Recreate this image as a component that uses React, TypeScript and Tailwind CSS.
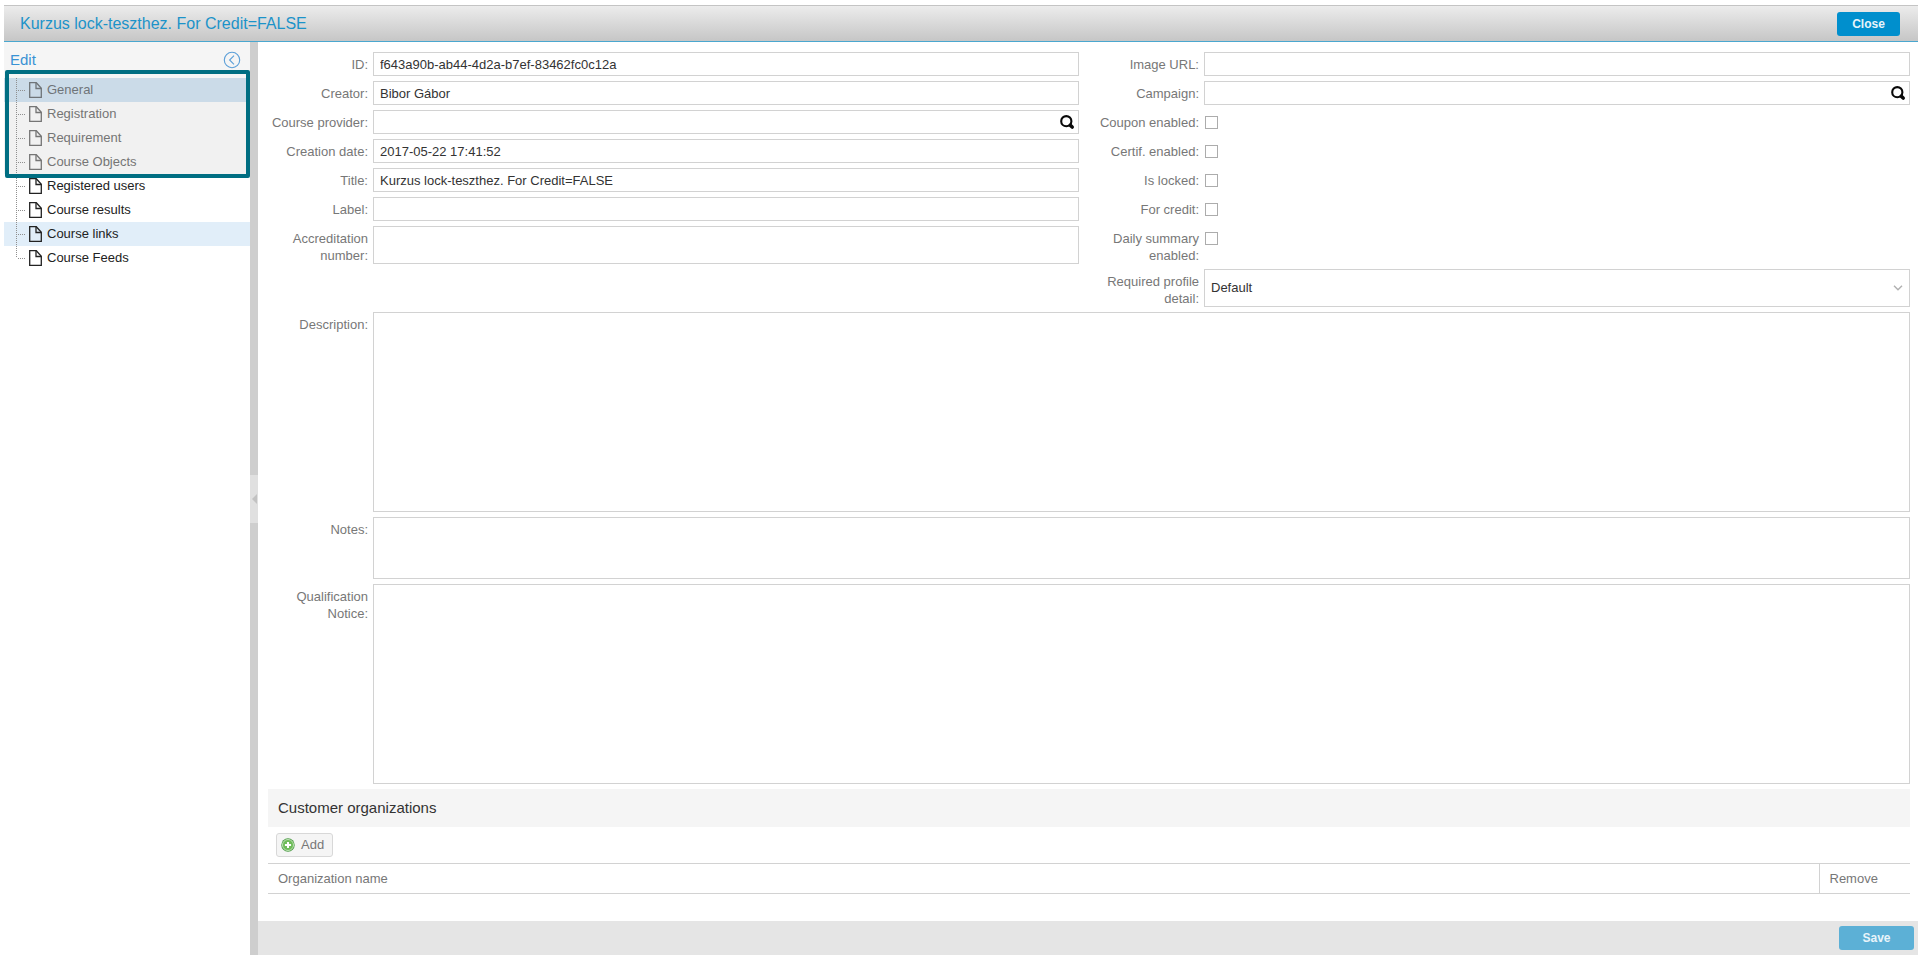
import type { ReactNode } from "react";

type NavItem = { label: string; locked: boolean; tone: string };

const navItems: NavItem[] = [
  { label: "General", locked: true, tone: "bg-[#cbdbe8] text-[#6f7478]" },
  { label: "Registration", locked: true, tone: "bg-[#f1f1f1] text-[#757575]" },
  { label: "Requirement", locked: true, tone: "bg-[#f1f1f1] text-[#757575]" },
  { label: "Course Objects", locked: true, tone: "bg-[#f1f1f1] text-[#757575]" },
  { label: "Registered users", locked: false, tone: "text-[#222]" },
  { label: "Course results", locked: false, tone: "text-[#222]" },
  { label: "Course links", locked: false, tone: "bg-[#e1eef9] text-[#222]" },
  { label: "Course Feeds", locked: false, tone: "text-[#222]" },
];

function FileIcon() {
  return (
    <svg width="13" height="16" viewBox="0 0 13 16" fill="none" stroke="currentColor" strokeWidth="1.3" className="shrink-0">
      <path d="M.7.7h6.6l5 5.6v9H.7z" />
      <path d="M7 .7v5.8h5.3" />
    </svg>
  );
}

function SearchIcon() {
  return (
    <svg width="16" height="16" viewBox="0 0 16 16" fill="none" stroke="#0a0a0a">
      <circle cx="7.3" cy="7.2" r="5.1" strokeWidth="2.1" />
      <path d="M11.4 11.4l1.8 1.6" strokeWidth="3.6" strokeLinecap="round" />
    </svg>
  );
}

function TreeLine({ last }: { last: boolean }) {
  return (
    <svg width="13" height="24" viewBox="0 0 13 24" fill="none" stroke="#8f8f8f" strokeDasharray="1 1" className="shrink-0">
      <path d={last ? "M.5 0v12" : "M.5 0v24"} />
      <path d="M2 12.5h8" />
    </svg>
  );
}

function Sidebar() {
  return (
    <aside className="relative w-[246px] shrink-0 bg-white">
      <div className="flex h-9 items-center justify-between bg-[#f5f5f5] pr-[9px] pl-[6px]">
        <h2 className="text-[15px] text-[#3892d4]">Edit</h2>
        <button type="button" aria-label="Collapse menu" className="text-[#5b9fd8]">
          <svg width="18" height="18" viewBox="0 0 18 18" fill="none" stroke="currentColor" strokeWidth="1.1">
            <circle cx="9" cy="9" r="7.7" />
            <path d="M11 4.6L6.6 9l4.4 4.4" />
          </svg>
        </button>
      </div>
      <nav>
        <ul>
          {navItems.map((item, i) => (
            <li key={item.label}>
              <a
                href="#"
                aria-disabled={item.locked}
                className={`flex h-6 items-center pl-3 text-[13px] ${item.tone}`}
              >
                <TreeLine last={i === navItems.length - 1} />
                <FileIcon />
                <span className="pl-[5px]">{item.label}</span>
              </a>
            </li>
          ))}
        </ul>
      </nav>
      <div className="pointer-events-none absolute top-7 right-0 left-px h-[108px] rounded-[2px] border-4 border-[#006e82]" />
    </aside>
  );
}

function Row({ id, label, children }: { id: string; label: string; children: ReactNode }) {
  return (
    <div className="flex gap-[5px]">
      <label htmlFor={id} className="w-[100px] shrink-0 pt-1 text-right leading-[17px] text-[#777]">
        {label}
      </label>
      <div className="min-w-0 flex-1">{children}</div>
    </div>
  );
}

function TextRow({ id, label, value = "", tall = false, search = false }: { id: string; label: string; value?: string; tall?: boolean; search?: boolean }) {
  return (
    <Row id={id} label={label}>
      <div className={`flex items-center border border-[#d2d2d2] bg-white ${tall ? "h-[38px]" : "h-6"}`}>
        <input id={id} type="text" defaultValue={value} className="h-full min-w-0 flex-1 px-[6px] text-[#333] outline-none" />
        {search && (
          <button type="button" aria-label={`Search ${label}`} className="pr-[3px]">
            <SearchIcon />
          </button>
        )}
      </div>
    </Row>
  );
}

function CheckRow({ id, label }: { id: string; label: string }) {
  return (
    <Row id={id} label={label}>
      <div className="flex h-6 items-center pl-px">
        <input id={id} type="checkbox" className="size-[13px] appearance-none border border-[#acacac] bg-white checked:bg-[#008fcd]" />
      </div>
    </Row>
  );
}

function AreaRow({ id, label, size }: { id: string; label: string; size: string }) {
  return (
    <Row id={id} label={label}>
      <textarea id={id} className={`block w-full resize-none border border-[#d2d2d2] bg-white px-[6px] py-1 text-[#333] outline-none ${size}`} />
    </Row>
  );
}

function CourseForm() {
  return (
    <form className="flex flex-col gap-[5px]">
      <div className="grid grid-cols-2 gap-x-5">
        <div className="flex flex-col gap-[5px]">
          <TextRow id="id" label="ID:" value="f643a90b-ab44-4d2a-b7ef-83462fc0c12a" />
          <TextRow id="creator" label="Creator:" value="Bibor Gábor" />
          <TextRow id="provider" label="Course provider:" search />
          <TextRow id="created" label="Creation date:" value="2017-05-22 17:41:52" />
          <TextRow id="title" label="Title:" value="Kurzus lock-teszthez. For Credit=FALSE" />
          <TextRow id="label" label="Label:" />
          <TextRow id="accreditation" label="Accreditation number:" tall />
        </div>
        <div className="flex flex-col gap-[5px]">
          <TextRow id="image" label="Image URL:" />
          <TextRow id="campaign" label="Campaign:" search />
          <CheckRow id="coupon" label="Coupon enabled:" />
          <CheckRow id="certif" label="Certif. enabled:" />
          <CheckRow id="locked" label="Is locked:" />
          <CheckRow id="credit" label="For credit:" />
          <CheckRow id="daily" label="Daily summary enabled:" />
          <Row id="profile" label="Required profile detail:">
            <div className="relative">
              <select id="profile" className="block h-[38px] w-full appearance-none border border-[#d2d2d2] bg-white px-[6px] text-[#333] outline-none">
                <option>Default</option>
              </select>
              <svg width="10" height="6" viewBox="0 0 10 6" fill="none" stroke="#b0b0b0" strokeWidth="1.4" className="pointer-events-none absolute top-4 right-[7px]">
                <path d="M1 .8l4 4 4-4" />
              </svg>
            </div>
          </Row>
        </div>
      </div>
      <AreaRow id="description" label="Description:" size="h-[200px]" />
      <AreaRow id="notes" label="Notes:" size="h-[62px]" />
      <AreaRow id="qualification" label="Qualification Notice:" size="h-[200px]" />
    </form>
  );
}

function Organizations() {
  return (
    <section>
      <h2 className="flex h-[38px] items-center bg-[#f5f5f5] px-[10px] text-[15px] text-[#333]">Customer organizations</h2>
      <div className="px-2 py-[6px]">
        <button type="button" className="flex h-6 items-center gap-[6px] rounded-[3px] border border-[#d8d8d8] bg-[#f5f5f5] pr-2 pl-1 text-[#777]">
          <svg width="14" height="14" viewBox="0 0 15 15">
            <circle cx="7.5" cy="7.5" r="7.2" fill="#4b9a45" />
            <circle cx="7.5" cy="7.5" r="5.9" fill="#6dbb58" stroke="#c4e6ba" strokeWidth="1" />
            <path d="M6.4 4.2h2.2v2.2h2.2v2.2H8.6v2.2H6.4V8.6H4.2V6.4h2.2z" fill="#fff" />
          </svg>
          Add
        </button>
      </div>
      <table className="w-full table-fixed border-collapse text-left text-[#777]">
        <thead>
          <tr className="h-[30px] border-y border-[#d2d2d2]">
            <th className="px-[10px] font-normal">Organization name</th>
            <th className="w-[91px] border-l border-[#d2d2d2] px-[10px] font-normal">Remove</th>
          </tr>
        </thead>
      </table>
    </section>
  );
}

export default function App() {
  return (
    <div className="flex min-h-screen flex-col bg-white pt-[5px] pr-[6px] pb-[5px] pl-1 font-['Liberation_Sans',Arial,sans-serif] text-[13px]">
      <header className="flex h-[37px] items-center justify-between border-t border-b border-t-[#c4c4c4] border-b-[#4aa7cf] bg-linear-to-b from-[#ececec] to-[#c6c6c6] pr-[18px] pl-4">
        <h1 className="text-base text-[#1c93c9]">Kurzus lock-teszthez. For Credit=FALSE</h1>
        <button type="button" className="h-6 w-[63px] rounded-[3px] bg-[#008fcd] text-xs font-bold text-[#e8f4fa]">
          Close
        </button>
      </header>
      <div className="flex flex-1">
        <Sidebar />
        <div className="flex w-2 shrink-0 flex-col items-center justify-center bg-[#cecece]">
          <button type="button" aria-label="Collapse panel" className="flex h-12 w-2 items-center justify-center bg-[#e0e0e0]">
            <svg width="5" height="10" viewBox="0 0 5 10" fill="#c2c2c2">
              <path d="M5 0v10L0 5z" />
            </svg>
          </button>
        </div>
        <div className="flex min-w-0 flex-1 flex-col">
          <main className="flex flex-1 flex-col gap-[5px] px-[10px] pt-[10px] pr-2">
            <CourseForm />
            <Organizations />
          </main>
          <footer className="flex h-[34px] items-center justify-end bg-[#e5e5e5] pr-1">
            <button type="button" className="h-6 w-[75px] rounded-[3px] bg-[#5cb0d6] text-xs font-bold text-[#e8f4fa]">
              Save
            </button>
          </footer>
        </div>
      </div>
    </div>
  );
}
